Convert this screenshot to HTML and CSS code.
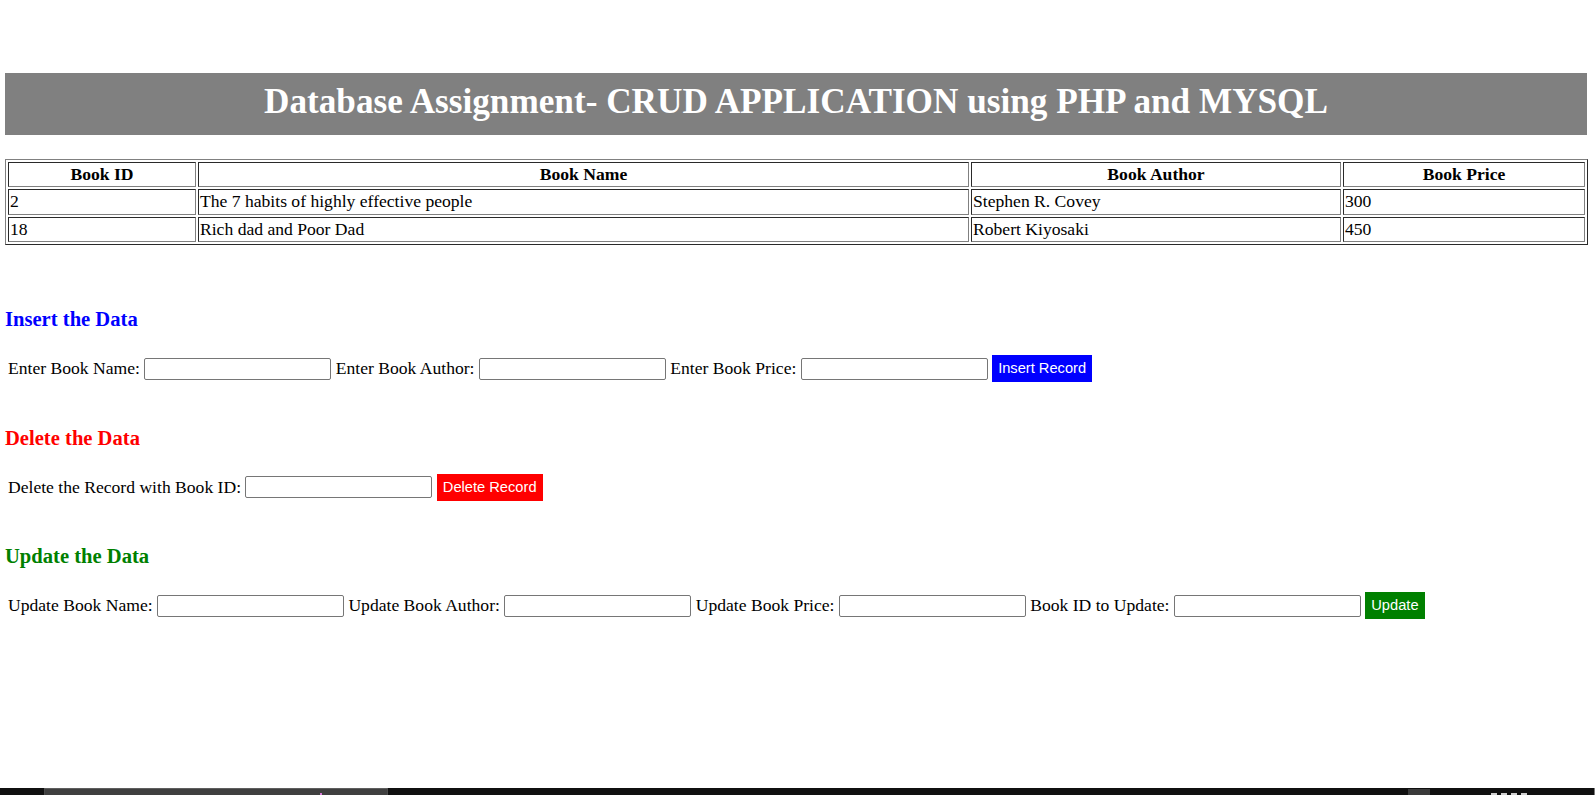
FILE: index.html
```html
<!DOCTYPE html>
<html lang="en">
<head>
<meta charset="utf-8">
<title>CRUD Application</title>
<link rel="stylesheet" href="styles.css">
</head>
<body>
<main class="page">
  <h1 class="banner">Database Assignment- CRUD APPLICATION using PHP and MYSQL</h1>

  <table class="books">
    <thead>
      <tr>
        <th class="col-id">Book ID</th>
        <th class="col-name">Book Name</th>
        <th class="col-author">Book Author</th>
        <th class="col-price">Book Price</th>
      </tr>
    </thead>
    <tbody>
      <tr>
        <td>2</td>
        <td>The 7 habits of highly effective people</td>
        <td>Stephen R. Covey</td>
        <td>300</td>
      </tr>
      <tr>
        <td>18</td>
        <td>Rich dad and Poor Dad</td>
        <td>Robert Kiyosaki</td>
        <td>450</td>
      </tr>
    </tbody>
  </table>

  <section class="crud crud-insert">
    <h3 class="crud-title title-insert">Insert the Data</h3>
    <form class="crud-row">
      <span class="lbl">Enter Book Name:</span><input class="field" type="text">
      <span class="lbl">Enter Book Author:</span><input class="field" type="text">
      <span class="lbl">Enter Book Price:</span><input class="field" type="text">
      <button class="btn btn-insert" type="button">Insert Record</button>
    </form>
  </section>

  <section class="crud">
    <h3 class="crud-title title-delete">Delete the Data</h3>
    <form class="crud-row">
      <span class="lbl">Delete the Record with Book ID:</span><input class="field" type="text">
      <button class="btn btn-delete" type="button">Delete Record</button>
    </form>
  </section>

  <section class="crud">
    <h3 class="crud-title title-update">Update the Data</h3>
    <form class="crud-row">
      <span class="lbl">Update Book Name:</span><input class="field" type="text">
      <span class="lbl">Update Book Author:</span><input class="field" type="text">
      <span class="lbl">Update Book Price:</span><input class="field" type="text">
      <span class="lbl">Book ID to Update:</span><input class="field" type="text">
      <button class="btn btn-update" type="button">Update</button>
    </form>
  </section>
</main>

<footer class="taskbar">
  <div class="tb-search"><span class="tb-dot"></span></div>
  <div class="tb-icon"></div>
  <div class="tb-clock"><span class="tb-digit"></span><span class="tb-digit"></span><span class="tb-digit"></span><span class="tb-digit"></span></div>
  <div class="tb-edge"></div>
</footer>
</body>
</html>
```

FILE: styles.css
```css
html, body {
  margin: 0;
  padding: 0;
  background: #ffffff;
}

body {
  min-height: 100vh;
  display: flex;
  flex-direction: column;
  font-family: "Liberation Serif", "Times New Roman", serif;
  font-size: 17.6px;
  color: #000000;
}

.page {
  padding: 73px 8px 0 5px;
}

.banner {
  margin: 0;
  height: 62px;
  box-sizing: border-box;
  background: #808080;
  color: #ffffff;
  text-align: center;
  font-size: 35.2px;
  font-weight: bold;
  line-height: 58px;
  padding-bottom: 4px;
}

.books {
  margin-top: 24px;
  width: 100%;
  table-layout: fixed;
  border-collapse: separate;
  border-spacing: 2.2px;
  border: 1px solid;
  border-color: #808080 #2a2a2a #2a2a2a #808080;
  font-size: 17.6px;
}

.books th,
.books td {
  box-sizing: border-box;
  padding: 1px 1px;
  line-height: 21.4px;
  border: 1px solid;
  border-color: #2a2a2a #808080 #808080 #2a2a2a;
  white-space: nowrap;
}

.books th {
  font-weight: bold;
  text-align: center;
}

.books td {
  text-align: left;
}

.col-id { width: 188px; }
.col-name { width: 771px; }
.col-author { width: 370px; }
.col-price { width: 242px; }

.crud {
  margin-top: 44.5px;
}

.crud-insert {
  margin-top: 63px;
}

.crud-title {
  margin: 0 0 24px 0;
  font-size: 20.6px;
  font-weight: bold;
}

.title-insert { color: #0000ff; }
.title-delete { color: #ff0000; }
.title-update { color: #008000; }

.crud-row {
  margin: 0;
  padding-left: 3px;
  display: flex;
  align-items: center;
  gap: 4.4px;
  height: 27px;
}

.lbl {
  white-space: nowrap;
}

.field {
  box-sizing: border-box;
  width: 187px;
  height: 22px;
  margin: 0;
  padding: 1px 2px;
  border: 1px solid #767676;
  border-radius: 2px;
  background: #ffffff;
  font-family: "Liberation Sans", Arial, sans-serif;
  font-size: 14.67px;
}

.btn {
  box-sizing: border-box;
  height: 27px;
  margin: 0;
  padding: 0 6px;
  border: none;
  color: #ffffff;
  font-family: "Liberation Sans", Arial, sans-serif;
  font-size: 14.67px;
  line-height: 27px;
  white-space: nowrap;
}

.btn-insert { background: #0000ff; }
.btn-delete { background: #ff0000; }
.btn-update { background: #008000; }

.taskbar {
  margin-top: auto;
  height: 7px;
  background: #101010;
  display: flex;
  align-items: flex-start;
  overflow: hidden;
}

.tb-search {
  margin-left: 44px;
  width: 344px;
  height: 7px;
  box-sizing: border-box;
  background: #3f3f3f;
  border-top: 1px solid #5e5e5e;
  border-left: 1px solid #4a4a4a;
  border-right: 1px solid #4a4a4a;
  display: flex;
  align-items: flex-end;
}

.tb-dot {
  margin-left: 275px;
  width: 2px;
  height: 2px;
  background: #d77ad7;
}

.tb-icon {
  margin-left: 1020px;
  margin-top: 1px;
  width: 22px;
  height: 6px;
  background: #3a3a3a;
}

.tb-clock {
  margin-left: 61px;
  width: 45px;
  height: 7px;
  display: flex;
  align-items: flex-end;
  gap: 4px;
}

.tb-digit {
  width: 6px;
  height: 2px;
  background: #cfcfcf;
}

.tb-edge {
  margin-left: auto;
  width: 1px;
  height: 7px;
  background: #7a7a7a;
}
```
